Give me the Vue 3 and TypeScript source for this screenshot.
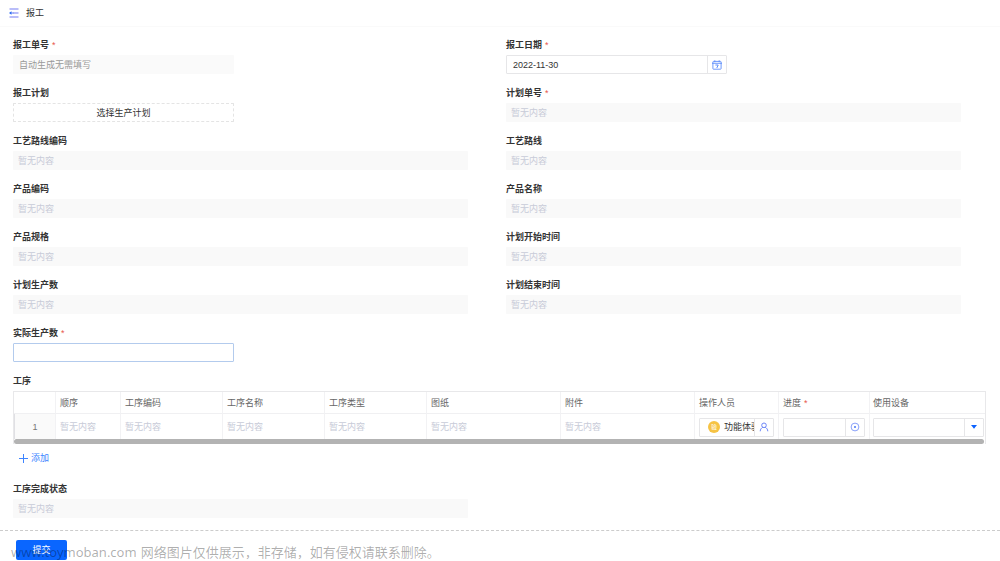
<script setup lang="ts">
import { ref } from 'vue'

interface Field {
  id: string
  label: string
  kind: 'auto' | 'date' | 'pick' | 'empty' | 'input'
  required?: boolean
}

const fields: Field[] = [
  { id: 'report-no', label: '报工单号', kind: 'auto', required: true },
  { id: 'report-date', label: '报工日期', kind: 'date', required: true },
  { id: 'report-plan', label: '报工计划', kind: 'pick' },
  { id: 'plan-no', label: '计划单号', kind: 'empty', required: true },
  { id: 'route-code', label: '工艺路线编码', kind: 'empty' },
  { id: 'route', label: '工艺路线', kind: 'empty' },
  { id: 'product-code', label: '产品编码', kind: 'empty' },
  { id: 'product-name', label: '产品名称', kind: 'empty' },
  { id: 'product-spec', label: '产品规格', kind: 'empty' },
  { id: 'plan-start', label: '计划开始时间', kind: 'empty' },
  { id: 'plan-count', label: '计划生产数', kind: 'empty' },
  { id: 'plan-end', label: '计划结束时间', kind: 'empty' },
  { id: 'real-count', label: '实际生产数', kind: 'input', required: true },
]

const textColumns = ['顺序', '工序编码', '工序名称', '工序类型', '图纸', '附件']
const reportDate = ref('2022-11-30')
const realCount = ref('')
const progress = ref('')
const device = ref('')
</script>

<template>
  <div class="page">
    <header class="topbar">
      <button class="icon-button" type="button" aria-label="收起菜单">
        <svg width="10" height="10" viewBox="0 0 10 10">
          <path d="M0.5 1H9.5M4 5H9.5M0.5 9H9.5" fill="none" stroke="#a3a8f8" stroke-width="1.3" />
          <path d="M0 5L2.5 3.2V6.8Z" fill="#2468f2" />
          <path d="M2 5H4.5" stroke="#5b7df5" />
        </svg>
      </button>
      <h1>报工</h1>
    </header>

    <form class="form" @submit.prevent>
      <div class="grid">
        <div v-for="f in fields" :key="f.id" class="field">
          <label class="label" :for="f.id">{{ f.label }}<span v-if="f.required" class="star">*</span></label>
          <input v-if="f.kind === 'auto'" :id="f.id" class="box short auto" readonly value="自动生成无需填写" />
          <div v-else-if="f.kind === 'date'" class="box short combo">
            <input :id="f.id" v-model="reportDate" type="text" />
            <button class="suffix" type="button" aria-label="选择日期">
              <svg width="10" height="10" viewBox="0 0 10 10" fill="none" stroke="#5c8dfa">
                <rect x="0.9" y="1.4" width="8.2" height="7.8" rx="0.6" stroke-width="0.9" />
                <path d="M0 3.3H10M2.8 0.3V2.2M7.2 0.3V2.2" stroke-width="0.9" />
                <path d="M3.4 5H6.2L4.8 8" stroke-width="1" />
              </svg>
            </button>
          </div>
          <button v-else-if="f.kind === 'pick'" :id="f.id" class="box short pick" type="button">选择生产计划</button>
          <input v-else-if="f.kind === 'input'" :id="f.id" v-model="realCount" class="box short entry" type="text" />
          <input v-else :id="f.id" class="box empty" readonly placeholder="暂无内容" />
        </div>
      </div>

      <section class="process">
        <h2 class="label">工序</h2>
        <div class="table-frame">
          <table>
            <colgroup>
              <col class="c-index" /><col class="c-order" /><col class="c-mid" /><col class="c-mid" /><col class="c-mid" />
              <col class="c-wide" /><col class="c-wide" /><col class="c-user" /><col class="c-progress" /><col />
            </colgroup>
            <thead>
              <tr>
                <th></th>
                <th v-for="c in textColumns" :key="c">{{ c }}</th>
                <th>操作人员</th>
                <th>进度<span class="star">*</span></th>
                <th>使用设备</th>
              </tr>
            </thead>
            <tbody>
              <tr>
                <td class="index">1</td>
                <td v-for="c in textColumns" :key="c" class="none">暂无内容</td>
                <td>
                  <div class="box combo">
                    <span class="person"><span class="avatar">验</span><span class="name">功能体验</span></span>
                    <button class="suffix" type="button" aria-label="选择人员">
                      <svg width="10" height="10" viewBox="0 0 10 10" fill="none" stroke="#6d86f7">
                        <circle cx="5" cy="3.3" r="2.3" />
                        <path d="M1.2 9.3C1.2 7.3 2.5 5.9 3.8 5.3M8.8 9.3C8.8 7.3 7.5 5.9 6.2 5.3" />
                      </svg>
                    </button>
                  </div>
                </td>
                <td>
                  <div class="box combo">
                    <input v-model="progress" type="text" aria-label="进度" />
                    <button class="suffix" type="button" aria-label="选择进度">
                      <svg width="10" height="10" viewBox="0 0 10 10">
                        <circle cx="5" cy="5" r="3.9" fill="none" stroke="#7d96f8" stroke-width="0.9" />
                        <circle cx="5" cy="5" r="1" fill="#4976f7" />
                      </svg>
                    </button>
                  </div>
                </td>
                <td>
                  <div class="box combo">
                    <input v-model="device" type="text" aria-label="使用设备" />
                    <button class="suffix" type="button" aria-label="展开设备列表">
                      <svg width="8" height="6" viewBox="0 0 8 6"><path d="M1 1H7L4 4.8Z" fill="#0b62ff" /></svg>
                    </button>
                  </div>
                </td>
              </tr>
            </tbody>
          </table>
          <div class="scroll"><div class="thumb"></div></div>
        </div>
        <button class="add" type="button">
          <svg width="9" height="9" viewBox="0 0 9 9"><path d="M4.5 0V9M0 4.5H9" stroke="#3d84ff" /></svg>
          添加
        </button>
      </section>

      <div class="grid">
        <div class="field">
          <label class="label" for="status">工序完成状态</label>
          <input id="status" class="box empty" readonly placeholder="暂无内容" />
        </div>
      </div>

      <footer class="footer">
        <button class="submit" type="submit">提交</button>
        <p class="notice"><span class="site">www.toymoban.com</span>网络图片仅供展示，非存储，如有侵权请联系删除。</p>
      </footer>
    </form>
  </div>
</template>

<style>
body {
  margin: 0;
  background: #fff;
}
</style>

<style scoped>
.page,
.page * {
  box-sizing: border-box;
}
.page {
  font: 9px/18px "Liberation Sans", "Noto Sans CJK SC", sans-serif;
  color: #333;
}
button,
input {
  font: inherit;
  color: inherit;
  margin: 0;
  padding: 0;
  border: 0;
  background: none;
  outline: none;
}
button {
  cursor: pointer;
}
svg {
  display: block;
  flex: none;
}
.topbar {
  display: flex;
  align-items: center;
  gap: 7px;
  height: 27px;
  padding: 0 9px;
  border-bottom: 1px solid #fafafa;
}
h1 {
  margin: 0;
  font-size: 9px;
  font-weight: 400;
}
.form {
  padding-top: 9px;
}
.grid {
  display: grid;
  grid-template-columns: 1fr 1fr;
  column-gap: 38px;
  row-gap: 10px;
  padding: 0 39px 0 13px;
}
.field {
  display: flex;
  flex-direction: column;
  min-width: 0;
}
.label {
  margin: 0;
  font-size: 9px;
  font-weight: 700;
  line-height: 19px;
}
.star {
  margin-left: 3px;
  color: #e8554d;
  font-weight: 400;
}
.box {
  display: block;
  width: 100%;
  height: 19px;
  border-radius: 1px;
}
.short {
  width: 221px;
}
.auto {
  padding: 0 6px;
  background: #fafafa;
  color: #999;
}
.empty {
  padding: 0 5px;
  background: #f9f9f9;
}
.empty::placeholder {
  color: #c8cbd8;
  opacity: 1;
}
.pick {
  padding-top: 1px;
  border: 1px dashed #e4e4e4;
  line-height: 16px;
}
.entry {
  padding: 0 6px;
  border: 1px solid #b3cbed;
}
.combo {
  display: flex;
  border: 1px solid #e6e6e8;
  background: #fff;
}
.combo input {
  flex: 1;
  min-width: 0;
  padding: 1px 6px 0;
}
.suffix {
  display: flex;
  flex: none;
  align-items: center;
  justify-content: center;
  width: 19px;
  border-left: 1px solid #e6e6e8;
}
.process {
  margin: 10px 14px 12px 13px;
}
.table-frame {
  border: 1px solid #e8e8ea;
  border-bottom: 0;
}
table {
  width: 100%;
  table-layout: fixed;
  border-collapse: separate;
  border-spacing: 0;
}
.c-index { width: 42px; }
.c-order { width: 65px; }
.c-mid { width: 102px; }
.c-wide { width: 134px; }
.c-user { width: 84px; }
.c-progress { width: 91px; }
th,
td {
  padding: 1px 4px 0;
  border-right: 1px solid #f2f2f4;
  text-align: left;
  font-weight: 400;
}
th:last-child,
td:last-child {
  border-right: 0;
  padding-left: 3px;
}
td:last-child {
  padding-right: 1px;
}
th {
  height: 22px;
  border-bottom: 1px solid #f0f0f2;
  color: #666;
}
td {
  height: 25px;
}
td.index {
  background: #fafafa;
  border-left: 1px solid #e0e0e4;
  text-align: center;
  color: #777;
}
.none {
  color: #c8cbd8;
}
.person {
  display: flex;
  flex: 1;
  align-items: center;
  gap: 4px;
  min-width: 0;
  padding-left: 8px;
  overflow: hidden;
  white-space: nowrap;
}
.avatar {
  flex: none;
  width: 12px;
  height: 12px;
  border-radius: 50%;
  background: #f6c344;
  color: #fff;
  font-size: 6px;
  line-height: 12px;
  text-align: center;
}
.scroll {
  padding-right: 1px;
}
.thumb {
  height: 5px;
  border-radius: 3px;
  background: #b3b3b3;
}
.add {
  display: flex;
  align-items: center;
  gap: 3px;
  margin: 5px 0 0 6px;
  color: #3d84ff;
}
.process + .grid {
  padding-top: 1px;
}
.footer {
  position: relative;
  margin-top: 12px;
  padding: 9px 16px 2px;
  border-top: 1px dashed #ccc;
}
.submit {
  display: block;
  width: 51px;
  height: 20px;
  border-radius: 2px;
  background: #0a66ff;
  color: #fff;
}
.notice {
  position: absolute;
  left: 11px;
  top: 11px;
  margin: 0;
  font: 13px/20px "Noto Sans", "Noto Sans CJK SC", sans-serif;
  color: rgba(0, 0, 0, 0.32);
  white-space: nowrap;
  pointer-events: none;
}
.site {
  margin-right: 4px;
}
</style>
